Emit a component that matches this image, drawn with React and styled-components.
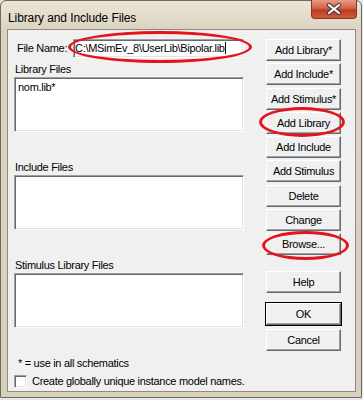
import styled, { createGlobalStyle } from "styled-components";

const Global = createGlobalStyle`
  body {
    margin: 0;
    background: #e4e8ee;
    font-family: "Liberation Sans", Arial, sans-serif;
  }
`;

const Window = styled.div`
  box-sizing: border-box;
  width: 362px;
  height: 398px;
  border: 1px solid #6f6a5e;
  border-radius: 6px 6px 0 0;
  background: linear-gradient(#ebe5d6, #dcd4c1 28px, #d8d0bc);
  padding: 0 5px 5px 6px;
  display: flex;
  flex-direction: column;
`;

const TitleBar = styled.div`
  height: 28px;
  display: flex;
  align-items: flex-start;
`;

const Title = styled.div`
  font-size: 12px;
  color: #000;
  padding: 10px 0 0 1px;
  letter-spacing: -0.1px;
`;

const CloseBtn = styled.div`
  margin-left: auto;
  margin-top: -1px;
  margin-right: -1px;
  width: 46px;
  height: 19px;
  border: 1px solid #7a3a2c;
  border-top: none;
  box-sizing: border-box;
  border-radius: 0 0 4px 4px;
  background: linear-gradient(#e89a86, #d4624a 45%, #c03a22 55%, #d0583c);
  display: flex;
  align-items: center;
  justify-content: center;
`;

const Client = styled.div`
  flex: 1;
  background: #f0f0f0;
  border: 1px solid #8f8a7e;
  display: flex;
  padding: 9px 0 0 6px;
  font-size: 11px;
  letter-spacing: -0.3px;
`;

const LeftCol = styled.div`
  width: 230px;
  display: flex;
  flex-direction: column;
`;

const RightCol = styled.div`
  width: 75px;
  margin-left: 22px;
  display: flex;
  flex-direction: column;
`;

const FileRow = styled.div`
  display: flex;
  align-items: center;
  height: 19px;
`;

const FieldLabel = styled.span`
  width: 56px;
  padding-left: 3px;
  line-height: 13px;
  white-space: nowrap;
`;

const Sunken = styled.div`
  box-sizing: border-box;
  background: #fff;
  border-top: 1px solid #a0a0a0;
  border-left: 1px solid #a0a0a0;
  border-right: 1px solid #fff;
  border-bottom: 1px solid #fff;
  box-shadow: inset 1px 1px 0 #696969, inset -1px -1px 0 #e3e3e3;
`;

const Field = styled(Sunken)`
  width: 171px;
  height: 19px;
  overflow: hidden;
  white-space: nowrap;
  line-height: 15px;
  padding: 1px 0 0 1px;
`;

const Caret = styled.span`
  display: inline-block;
  width: 1px;
  height: 12px;
  background: #000;
  vertical-align: -2px;
`;

const Label = styled.div`
  line-height: 13px;
  margin-top: ${(p) => p.$top}px;
  padding-left: ${(p) => p.$indent || 1}px;
`;

const List = styled(Sunken)`
  width: 230px;
  height: 55px;
  margin-top: 1px;
  padding: 3px 3px;
  line-height: 13px;
`;

const CheckRow = styled.div`
  display: flex;
  align-items: center;
  margin-top: 5px;
  gap: 5px;
  line-height: 13px;
  white-space: nowrap;
`;

const Check = styled(Sunken)`
  width: 13px;
  height: 13px;
  flex: none;
`;

const Circled = styled.div`
  position: relative;
  display: flex;
  flex-direction: column;
  margin-top: ${(p) => p.$top || 0}px;
  &::after {
    content: "";
    position: absolute;
    left: ${(p) => p.$l}px;
    right: ${(p) => p.$r}px;
    top: ${(p) => p.$t}px;
    bottom: ${(p) => p.$b}px;
    border: 3px solid #e3141d;
    border-radius: 50%;
    pointer-events: none;
  }
`;

const Button = styled.div`
  box-sizing: border-box;
  height: 22px;
  margin-top: ${(p) => p.$top || 0}px;
  background: #f0f0f0;
  border-top: 1px solid #fff;
  border-left: 1px solid #fff;
  border-right: 1px solid #696969;
  border-bottom: 1px solid #696969;
  box-shadow: inset -1px -1px 0 #a0a0a0;
  ${(p) => p.$default && `outline: 1px solid #000;`}
  display: flex;
  align-items: center;
  justify-content: center;
  color: #000;
  white-space: nowrap;
`;

const buttons = [
  { label: "Add Library*" },
  { label: "Add Include*" },
  { label: "Add Stimulus*" },
  { label: "Add Library", circle: { l: -7, r: -4, t: -5, b: -3 } },
  { label: "Add Include" },
  { label: "Add Stimulus" },
  { label: "Delete" },
  { label: "Change" },
  { label: "Browse...", circle: { l: -4, r: -8, t: -2, b: -5 } },
];

export default function App() {
  return (
    <>
      <Global />
      <Window>
        <TitleBar>
          <Title>Library and Include Files</Title>
          <CloseBtn>
            <svg width="16" height="12" viewBox="0 0 16 12">
              <path d="M3 2 L13 10 M13 2 L3 10" stroke="#4a3a36" strokeWidth="4.2" strokeLinecap="round" />
              <path d="M3 2 L13 10 M13 2 L3 10" stroke="#fff" strokeWidth="2.2" strokeLinecap="round" />
            </svg>
          </CloseBtn>
        </TitleBar>
        <Client>
          <LeftCol>
            <FileRow>
              <FieldLabel>File Name:</FieldLabel>
              <Circled $l={-5} $r={-8} $t={-8} $b={-5}>
                <Field>
                  C:\MSimEv_8\UserLib\Bipolar.lib
                  <Caret />
                </Field>
              </Circled>
            </FileRow>
            <Label $top={5}>Library Files</Label>
            <List>nom.lib*</List>
            <Label $top={29}>Include Files</Label>
            <List />
            <Label $top={29}>Stimulus Library Files</Label>
            <List />
            <Label $top={29} $indent={4}>* = use in all schematics</Label>
            <CheckRow>
              <Check />
              <span>Create globally unique instance model names.</span>
            </CheckRow>
          </LeftCol>
          <RightCol>
            {buttons.map((b, i) =>
              b.circle ? (
                <Circled key={b.label} $l={b.circle.l} $r={b.circle.r} $t={b.circle.t} $b={b.circle.b} $top={2.25}>
                  <Button>{b.label}</Button>
                </Circled>
              ) : (
                <Button key={b.label} $top={i ? 2.25 : 0}>{b.label}</Button>
              )
            )}
            <Button $top={16}>Help</Button>
            <Button $top={10} $default>OK</Button>
            <Button $top={4}>Cancel</Button>
          </RightCol>
        </Client>
      </Window>
    </>
  );
}
